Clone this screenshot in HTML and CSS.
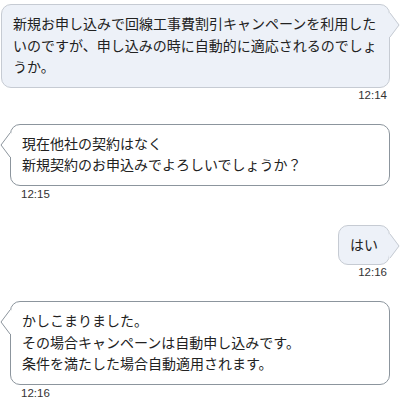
FILE: index.html
```html
<!DOCTYPE html>
<html lang="ja">
<head>
    <meta charset="UTF-8">
    <meta name="viewport" content="width=device-width, initial-scale=1.0">
    <title>チャット</title>
    <link rel="stylesheet" href="styles.css">
</head>
<body>
    <div class="chat">
        <div class="msg msg-me">
            <div class="bubble">新規お申し込みで回線工事費割引キャンペーンを利用したいのですが、申し込みの時に自動的に適応されるのでしょうか。<svg class="tail" width="11" height="24" viewBox="0 0 11 24"><polygon points="0,0 1.5,0 10.5,12 1.5,24 0,24"/><polyline points="1,0 10,12 1,24"/></svg></div>
            <div class="time">12:14</div>
        </div>
        <div class="msg msg-op">
            <div class="bubble">現在他社の契約はなく<br>新規契約のお申込みでよろしいでしょうか？<svg class="tail" width="11" height="24" viewBox="0 0 11 24"><polygon points="11,0 9.5,0 0.5,12 9.5,24 11,24"/><polyline points="10,0 1,12 10,24"/></svg></div>
            <div class="time">12:15</div>
        </div>
        <div class="msg msg-me">
            <div class="bubble">はい<svg class="tail" width="11" height="24" viewBox="0 0 11 24"><polygon points="0,0 1.5,0 10.5,12 1.5,24 0,24"/><polyline points="1,0 10,12 1,24"/></svg></div>
            <div class="time">12:16</div>
        </div>
        <div class="msg msg-op">
            <div class="bubble">かしこまりました。<br>その場合キャンペーンは自動申し込みです。<br>条件を満たした場合自動適用されます。<svg class="tail" width="11" height="24" viewBox="0 0 11 24"><polygon points="11,0 9.5,0 0.5,12 9.5,24 11,24"/><polyline points="10,0 1,12 10,24"/></svg></div>
            <div class="time">12:16</div>
        </div>
    </div>
</body>
</html>
```

FILE: styles.css
```css
body {
    margin: 0;
    background: #fff;
    font-family: "Noto Sans CJK JP", "Liberation Sans", sans-serif;
    color: #222;
}
.chat {
    display: flex;
    flex-direction: column;
    gap: 22px;
    padding: 4px 11px 0 1px;
}
.msg {
    display: flex;
    flex-direction: column;
}
.msg-me {
    align-items: flex-end;
}
.msg-op {
    margin-left: 9px;
}
.bubble {
    position: relative;
    font-size: 14px;
    line-height: 21.5px;
    padding: 8px 11px 9px;
    border-radius: 10px;
}
.msg-me .bubble {
    background: #edf1f8;
    border: 1px solid #c6cbd3;
}
.msg-op .bubble {
    background: #fff;
    border: 1px solid #8c959d;
}
.tail {
    position: absolute;
    top: 8px;
    display: block;
}
.tail polyline {
    fill: none;
    stroke-width: 1;
}
.msg-me .tail {
    left: 100%;
}
.msg-me .tail polygon {
    fill: #edf1f8;
}
.msg-me .tail polyline {
    stroke: #c6cbd3;
}
.msg-op .tail {
    right: 100%;
}
.msg-op .tail polygon {
    fill: #fff;
}
.msg-op .tail polyline {
    stroke: #8c959d;
}
.time {
    font-family: "Liberation Sans", Arial, sans-serif;
    font-size: 11.5px;
    line-height: 14px;
    color: #333;
}
.msg-me .time {
    padding-right: 3px;
}
.msg-op .time {
    padding-left: 11px;
    line-height: 17px;
}
```
